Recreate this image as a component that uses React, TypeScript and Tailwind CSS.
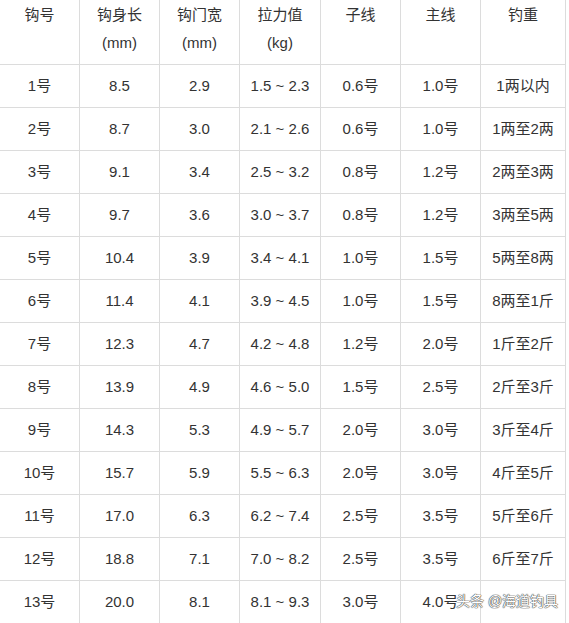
import React from 'react'

const header: string[][] = [
  ['钩号'],
  ['钩身长', '(mm)'],
  ['钩门宽', '(mm)'],
  ['拉力值', '(kg)'],
  ['子线'],
  ['主线'],
  ['钓重'],
]

const rows: string[][] = [
  ['1号', '8.5', '2.9', '1.5 ~ 2.3', '0.6号', '1.0号', '1两以内'],
  ['2号', '8.7', '3.0', '2.1 ~ 2.6', '0.6号', '1.0号', '1两至2两'],
  ['3号', '9.1', '3.4', '2.5 ~ 3.2', '0.8号', '1.2号', '2两至3两'],
  ['4号', '9.7', '3.6', '3.0 ~ 3.7', '0.8号', '1.2号', '3两至5两'],
  ['5号', '10.4', '3.9', '3.4 ~ 4.1', '1.0号', '1.5号', '5两至8两'],
  ['6号', '11.4', '4.1', '3.9 ~ 4.5', '1.0号', '1.5号', '8两至1斤'],
  ['7号', '12.3', '4.7', '4.2 ~ 4.8', '1.2号', '2.0号', '1斤至2斤'],
  ['8号', '13.9', '4.9', '4.6 ~ 5.0', '1.5号', '2.5号', '2斤至3斤'],
  ['9号', '14.3', '5.3', '4.9 ~ 5.7', '2.0号', '3.0号', '3斤至4斤'],
  ['10号', '15.7', '5.9', '5.5 ~ 6.3', '2.0号', '3.0号', '4斤至5斤'],
  ['11号', '17.0', '6.3', '6.2 ~ 7.4', '2.5号', '3.5号', '5斤至6斤'],
  ['12号', '18.8', '7.1', '7.0 ~ 8.2', '2.5号', '3.5号', '6斤至7斤'],
  ['13号', '20.0', '8.1', '8.1 ~ 9.3', '3.0号', '4.0号', ''],
]

const cols = 'grid grid-cols-[80px_80px_80px_81px_80px_80px_85px]'

const App: React.FC = () => {
  return (
    <div
      className="relative w-[569px] h-[623px] overflow-hidden bg-white text-[15px] text-[#333]"
      style={{ fontFamily: '"Liberation Sans", "Noto Sans CJK SC", sans-serif' }}
    >
      <div className={cols}>
        {header.map((lines, i) => (
          <div
            key={i}
            className="h-[65px] border-r border-b border-[#dcdcdc] pt-[1px] text-center leading-[28px]"
          >
            {lines.map((l) => (
              <div key={l}>{l}</div>
            ))}
          </div>
        ))}
      </div>
      {rows.map((row, r) => (
        <div key={r} className={cols}>
          {row.map((cell, c) => (
            <div
              key={c}
              className="h-[43px] border-r border-b border-[#dcdcdc] flex items-center justify-center whitespace-pre"
            >
              {cell}
            </div>
          ))}
        </div>
      ))}
      {/* watermark */}
      <div
        className="absolute left-[456px] top-[591px] text-[14px] leading-[20px] text-white whitespace-nowrap"
        style={{ textShadow: '0 0 1px #444, 0 0 1px #444, 0 0 1px #444' }}
      >
        头条 @海道钓具
      </div>
    </div>
  )
}

export default App
